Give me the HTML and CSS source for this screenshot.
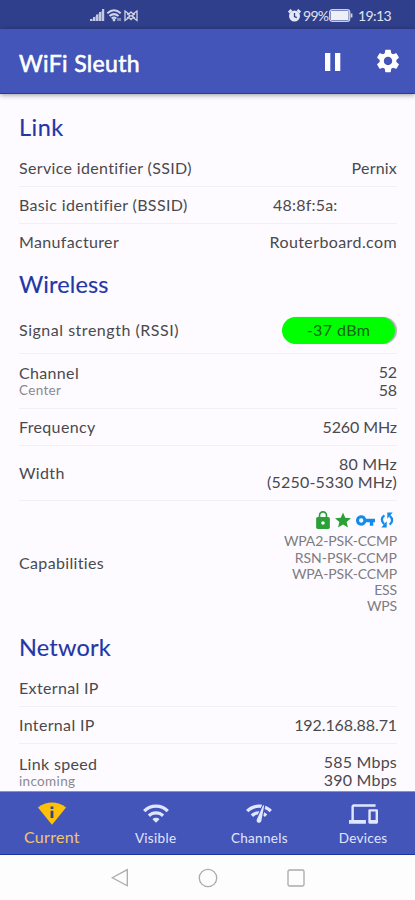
FILE: index.html
```html
<!DOCTYPE html>
<html lang="en">
<head>
<meta charset="utf-8">
<title>WiFi Sleuth</title>
<link rel="stylesheet" href="styles.css">
</head>
<body>
<div class="phone">
  <div class="status">
    <svg class="sig" viewBox="0 0 48 14" width="48" height="14">
      <g fill="#c3c9e2"><path d="M0 12L14 0v12z" opacity=".45"/><rect x="0" y="10" width="2.200" height="2"/><rect x="3" y="8" width="2.200" height="4"/><rect x="6" y="5.500" width="2.200" height="6.500"/><rect x="9" y="3" width="2.200" height="9"/><rect x="12" y="0" width="2.200" height="12"/></g>
      <g fill="none" stroke="#d0d4e8" stroke-width="2"><path d="M17.300 4.200Q24 -1.600 30.700 4.200"/><path d="M19.500 7Q24 3.200 28.500 7"/><path d="M21.700 9.500Q24 7.600 26.300 9.500"/></g>
      <circle cx="24" cy="11" r="1.400" fill="#d0d4e8"/><path d="M28 9v3M30 9v3" stroke="#d0d4e8"/>
      <path d="M35 2v9.500l4-3 2 2 2-2 4 3V2l-4 3-2-2-2 2zM37 5l3.500 1.800L37 9M45 5l-3.500 1.800L45 9" fill="none" stroke="#d0d4e8" stroke-width="1.300"/>
    </svg>
    <div class="status-right">
      <svg viewBox="0 0 13 13" width="13" height="13"><circle cx="6.500" cy="7" r="5.500" fill="#e4e7f4"/><path d="M.7 3.500L3.500 .8M12.300 3.500L9.500 .8" stroke="#e4e7f4" stroke-width="2.400"/><path d="M6.500 4v3.500l2.300 1.200" fill="none" stroke="#303f8d" stroke-width="1.300"/></svg>
      <span class="pct">99%</span>
      <svg viewBox="0 0 24 13" width="24" height="13"><rect x=".7" y=".7" width="20" height="11.600" rx="2.600" fill="none" stroke="#ccd1e7" stroke-width="1.300"/><rect x="1.800" y="1.800" width="17.800" height="9.400" rx="1" fill="#eef0f8"/><path d="M22.500 4.500v4" stroke="#ccd1e7" stroke-width="1.800"/></svg>
      <span class="time">19:13</span>
    </div>
  </div>
  <header class="appbar">
    <h1>WiFi Sleuth</h1>
    <svg class="pause" viewBox="0 0 16 18" width="16" height="18" fill="#fff"><path d="M0 0h5.300v18H0zM10 0h5.300v18H10z"/></svg>
    <svg class="gear" viewBox="0 0 24 24" width="28" height="28" fill="#fff"><path d="M19.140 12.940c.04-.3.060-.61.060-.94 0-.32-.02-.64-.07-.94l2.030-1.580c.18-.14.230-.41.120-.61l-1.920-3.320c-.12-.22-.37-.29-.59-.22l-2.390.96c-.5-.38-1.030-.7-1.620-.94l-.36-2.540c-.04-.24-.24-.41-.48-.41h-3.840c-.24 0-.43.17-.47.41l-.36 2.540c-.59.24-1.130.57-1.620.94l-2.390-.96c-.22-.08-.47 0-.59.22L2.740 8.870c-.12.21-.08.47.12.61l2.030 1.580c-.05.3-.09.63-.09.94s.02.64.07.94l-2.030 1.580c-.18.14-.23.41-.12.61l1.920 3.320c.12.22.37.29.59.22l2.390-.96c.5.38 1.030.7 1.620.94l.36 2.540c.05.24.24.41.48.41h3.840c.24 0 .44-.17.47-.41l.36-2.540c.59-.24 1.130-.56 1.620-.94l2.390.96c.22.08.47 0 .59-.22l1.920-3.320c.12-.22.070-.47-.12-.61l-2.010-1.580zM12 15.600c-1.980 0-3.600-1.620-3.600-3.600s1.620-3.600 3.600-3.600 3.600 1.620 3.600 3.600-1.620 3.600-3.600 3.600z"/></svg>
  </header>
  <main>
    <h2 class="h-link">Link</h2>
    <div class="row"><span>Service identifier (SSID)</span><span class="v">Pernix</span></div>
    <div class="row"><span>Basic identifier (BSSID)</span><span class="v masked">48:8f:5a:</span></div>
    <div class="row last"><span>Manufacturer</span><span class="v board">Routerboard.com</span></div>
    <h2 class="h-wireless">Wireless</h2>
    <div class="row rssi"><span>Signal strength (RSSI)</span><span class="pill">-37 dBm</span></div>
    <div class="row tall"><span>Channel<small>Center</small></span><span class="v num">52<br>58</span></div>
    <div class="row"><span>Frequency</span><span class="v num">5260 MHz</span></div>
    <div class="row width"><span>Width</span><span class="v">80 MHz<br>(5250-5330 MHz)</span></div>
    <div class="row caps last"><span>Capabilities</span>
      <div class="caplist">
        <div class="icons">
          <svg viewBox="4 1 16 21" width="14" height="18" fill="#2ba036"><path d="M18 8h-1V6c0-2.760-2.240-5-5-5S7 3.240 7 6v2H6c-1.100 0-2 .9-2 2v10c0 1.100.9 2 2 2h12c1.100 0 2-.9 2-2V10c0-1.100-.9-2-2-2zm-6 9c-1.100 0-2-.9-2-2s.9-2 2-2 2 .9 2 2-.9 2-2 2zm3.100-9H8.900V6c0-1.710 1.390-3.100 3.100-3.100s3.100 1.390 3.100 3.100z"/></svg>
          <svg viewBox="2 2 20 19" width="16" height="16" fill="#2ba036"><path d="M12 17.270L18.180 21l-1.640-7.030L22 9.240l-7.190-.61L12 2 9.190 8.630 2 9.240l5.460 4.730L5.820 21z"/></svg>
          <svg viewBox="1 6 22 12" width="19" height="11" fill="#148bec"><path d="M12.650 10A5.990 5.990 0 0 0 7 6c-3.310 0-6 2.690-6 6s2.690 6 6 6a5.990 5.990 0 0 0 5.650-4H17v4h4v-4h2v-4zM7 14.500a2.500 2.500 0 1 1 0-5 2.500 2.500 0 0 1 0 5z"/></svg>
          <svg class="sync" viewBox="0 0 14 18" width="14" height="18"><path d="M4.400 4.400C1.200 6.500 1 10.500 4.200 13.200M9.600 13.600C12.800 11.500 13 7.500 9.800 4.800" fill="none" stroke="#148bec" stroke-width="2.300"/><path d="M1.300 16.500h5.400v-6.200zM12.700 1.500H7.300v6.200z" fill="#148bec"/></svg>
        </div>
        <span>WPA2-PSK-CCMP</span><span class="rsn">RSN-PSK-CCMP</span><span>WPA-PSK-CCMP</span><span>ESS</span><span>WPS</span>
      </div>
    </div>
    <h2 class="h-network">Network</h2>
    <div class="row"><span>External IP</span></div>
    <div class="row"><span>Internal IP</span><span class="v num">192.168.88.71</span></div>
    <div class="row speed last"><span>Link speed<small>incoming</small></span><span class="v">585 Mbps<br>390 Mbps</span></div>
  </main>
  <nav class="tabs">
    <div class="tab active"><svg viewBox="0 0 28 23" width="28" height="23"><path d="M0 5.500C8 -1.300 20 -1.300 28 5.500L14 22.800z" fill="#ffc107"/><path d="M12.600 4.500h2.800V7h-2.800zM12.600 8.800h2.800v7.200h-2.800z" fill="#34418c"/></svg><span>Current</span></div>
    <div class="tab"><svg viewBox="1 4 22 17" width="26" height="20" fill="#e1e6ff"><path d="M1 9l2 2c4.970-4.970 13.030-4.970 18 0l2-2C16.930 2.930 7.080 2.930 1 9zm8 8l3 3 3-3c-1.650-1.660-4.340-1.660-6 0zm-4-4l2 2c2.760-2.760 7.240-2.760 10 0l2-2C15.140 9.140 8.870 9.140 5 13z"/></svg><span>Visible</span></div>
    <div class="tab"><svg viewBox="1 4 22 17" width="26" height="20" fill="#e1e6ff"><path d="M15.900 5c-.17 0-.32.090-.41.230l-.07.150-5.180 11.650c-.16.290-.26.610-.26.960 0 1.110.9 2.010 2.010 2.010.96 0 1.770-.68 1.960-1.590l.01-.03L16.400 5.500c0-.28-.22-.5-.5-.5zM1 9l2 2c2.880-2.880 6.790-4.080 10.530-3.620l1.190-2.680C9.890 3.840 4.740 5.270 1 9zm20 2l2-2c-1.640-1.640-3.550-2.820-5.590-3.570l-.53 2.820c1.500.62 2.900 1.530 4.120 2.750zm-4 4l2-2c-.8-.8-1.700-1.420-2.660-1.890l-.55 2.920c.42.270.83.590 1.210.97zM5 13l2 2c1.130-1.130 2.560-1.790 4.030-2l1.280-2.880C9.700 10 7.010 10.990 5 13z"/></svg><span>Channels</span></div>
    <div class="tab"><svg viewBox="0 4 24 16" width="29" height="19" fill="#e1e6ff"><path d="M4 6h18V4H4c-1.100 0-2 .9-2 2v11H0v3h14v-3H4V6zm19 2h-6c-.55 0-1 .45-1 1v10c0 .55.450 1 1 1h6c.55 0 1-.45 1-1V9c0-.55-.45-1-1-1zm-1 9h-4v-7h4v7z"/></svg><span>Devices</span></div>
  </nav>
  <footer class="sysnav">
    <svg viewBox="0 0 18 20" width="18" height="20"><path d="M16.300 1.700v16L1.300 9.700z"/></svg>
    <svg viewBox="0 0 20 20" width="20" height="20"><circle cx="10" cy="10" r="8.700"/></svg>
    <svg viewBox="0 0 18 18" width="18" height="18"><rect x="1" y="1" width="16" height="16" rx="1.500"/></svg>
  </footer>
</div>
</body>
</html>
```
FILE: styles.css
```css
* { box-sizing: border-box; }
body { margin: 0; font-family: Lato, "Liberation Sans", sans-serif; background: #fdfbff; color: #4a494d; }
svg { display: block; flex: none; }
.phone { width: 415px; height: 900px; display: flex; flex-direction: column; overflow: hidden; }
.status { height: 29px; flex: none; background: #303f8b; display: flex; justify-content: space-between; padding: 9px 24px 0 90px; }
.status-right { display: flex; height: 13px; align-items: center; color: #e0e3f2; font-size: 14px; }
.pct { margin-left: 2px; width: 26px; letter-spacing: -0.700px; }
.time { margin-left: 5px; width: 33px; letter-spacing: -0.600px; }
.appbar { height: 65px; flex: none; background: #4355b9; color: #fff; display: flex; align-items: center; padding: 3px 13px 0 19px; border-bottom: 1px solid #2438a6; box-shadow: 0 1px 5px rgba(0,0,0,.4); z-index: 1; }
h1 { margin: 0; flex: 1; font-size: 23px; font-weight: 400; letter-spacing: .35px; -webkit-text-stroke: .6px #fff; }
.pause { margin: -2px 33px 0 0; }
.gear { margin-top: -3px; }
main { flex: 1; overflow: hidden; padding: 0 18px 0 19px; min-height: 0; }
h2 { margin: 0; font-size: 23.500px; font-weight: 400; color: #2336a6; display: flex; align-items: center; letter-spacing: .2px; -webkit-text-stroke: .15px #2336a6; }
.h-link { height: 56px; padding-top: 10px; letter-spacing: .5px; }
.h-wireless { height: 47px; padding-bottom: 2px; letter-spacing: .1px; }
.h-network { height: 45px; padding-bottom: 1px; }
.row { height: 37px; border-bottom: 1px solid #f3f0f5; display: flex; align-items: center; justify-content: space-between; font-size: 16px; line-height: 18.500px; letter-spacing: .34px; }
.row.last { border-bottom: 0; }
.v { text-align: right; letter-spacing: .2px; }
.board { letter-spacing: .4px; }
.num { letter-spacing: -.1px; }
.masked { width: 124px; text-align: left; }
.row.rssi { height: 46px; letter-spacing: .52px; }
.pill { width: 113px; height: 27px; border-radius: 14px; background: #0f0; color: #17641b; display: flex; align-items: center; justify-content: center; box-shadow: 2px 0 1px #b4aebb; margin: -1px 2px 0 0; letter-spacing: .4px; }
.row.tall { height: 55px; }
small { display: block; font-size: 13.500px; line-height: 16px; color: #8b898f; }
.row.width { height: 55px; }
.row.caps { height: 124px; }
.caplist { display: flex; flex-direction: column; align-items: flex-end; font-size: 14px; line-height: 16.200px; color: #7e7c82; letter-spacing: -.15px; }
.rsn { letter-spacing: 0; }
.icons { display: flex; align-items: center; gap: 5px; height: 18px; margin-bottom: 4px; padding-right: 3px; }
.row.speed { height: 56px; }
.speed .v { margin-top: -2px; }
.tabs { height: 64px; flex: none; background: #4355b9; border-top: 1px solid #8390d5; border-bottom: 1px solid #1d33a2; display: grid; grid-template-columns: repeat(4, 1fr); color: #e1e6ff; }
.tab { display: flex; flex-direction: column; align-items: center; padding-top: 12px; font-size: 13.500px; }
.tab svg { height: 20px; }
.tab span { line-height: 18px; margin-top: 5px; letter-spacing: .3px; }
.tab.active { color: #f4c56a; font-size: 16px; padding-top: 10px; }
.tab.active svg { height: 23px; }
.tab.active span { margin-top: 3px; }
.sysnav { height: 45px; flex: none; background: #fdfdfd; display: flex; align-items: center; justify-content: center; gap: 69px; fill: none; stroke: #aaa; stroke-width: 1.300; }
```
